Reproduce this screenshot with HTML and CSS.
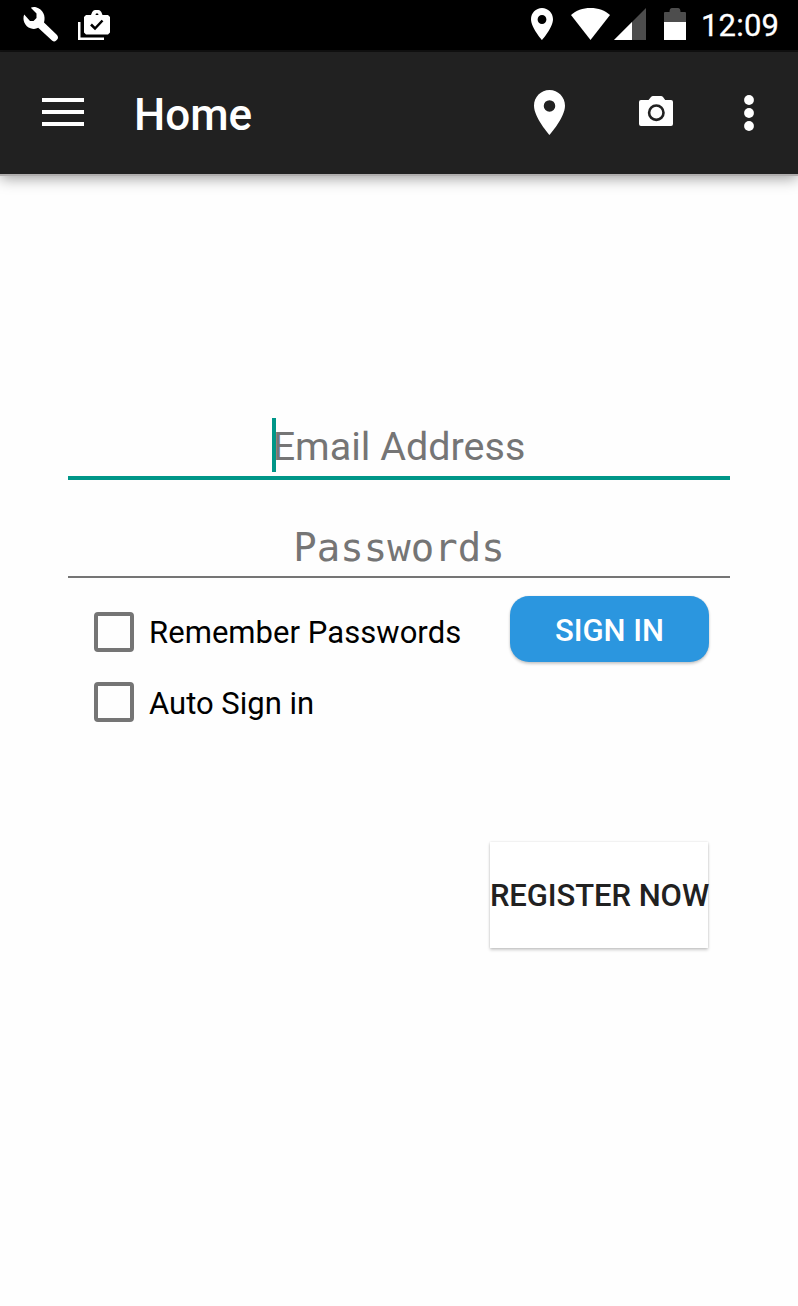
FILE: index.html
```
<!DOCTYPE html>
<html lang="en">
<head>
<meta charset="utf-8">
<title>Home</title>
<link rel="stylesheet" href="styles.css">
</head>
<body>
<div class="screen">
  <div class="status">
    <svg class="wrench" width="36" height="36" viewBox="0 0 36 36"><path d="M33.500 27.500L21 15.500C23 9 20 2 13 .2c-2-.4-4-.2-5.200.6L13.500 6.500V11l-3 3H7L1.200 7.500C-1 13 2 19.500 7.500 21.300c3 1 5.500.7 7.700-.5L29 33.500q2.200 1.800 4.200 0l1.200-1.200q1.600-2-.9-4.800z"/></svg>
    <svg class="bag" width="32" height="31" viewBox="0 0 32 31"><path d="M0 12h2.500v15.500H26V30H0zM8 5h5l1.200-3Q15.500 0 17 0h3.500q1.500 0 2.800 2L24.500 5H30l2 2v15.500L30 24.500H8L6 22.500V7zM17.500 5h3l-.5-1.500h-2z" fill-rule="evenodd"/><path class="tick" d="M13 14.500l4 4 7.500-8"/></svg>
    <span class="gap"></span>
    <svg class="pin-small" width="22" height="32" viewBox="5 2 14 20" preserveAspectRatio="none"><path d="M12 2C8.130 2 5 5.130 5 9c0 5.250 7 13 7 13s7-7.750 7-13c0-3.870-3.130-7-7-7zm0 10a2.800 2.800 0 0 1 0-5.600 2.800 2.800 0 0 1 0 5.600z"/></svg>
    <svg class="wifi" width="39" height="32" viewBox="0 0 40 32" preserveAspectRatio="none"><path d="M0 7C5 2.500 12 0 20 0s15 2.500 20 7L20 32z"/></svg>
    <svg class="signal" width="32" height="32" viewBox="0 0 32 32"><path class="dim" d="M0 32L32 0v32z"/><path d="M0 32L18 14v18z"/></svg>
    <svg class="battery" width="22" height="32" viewBox="0 0 22 32"><path class="dim" d="M0 5q0-1 1-1h4.500q0-4 2.500-4h6q2.500 0 2.500 4H21q1 0 1 1v9H0z"/><path d="M0 14h22v18H0z"/></svg>
    <span class="clock">12:09</span>
  </div>
  <div class="appbar">
    <svg class="menu" width="42" height="28" viewBox="0 0 42 28"><path d="M0 0h42v4H0zM0 12h42v4H0zM0 24h42v4H0z"/></svg>
    <h1 class="title">Home</h1>
    <span class="gap"></span>
    <svg class="pin" width="31" height="45" viewBox="5 2 14 20" preserveAspectRatio="none"><path d="M12 2C8.130 2 5 5.130 5 9c0 5.250 7 13 7 13s7-7.750 7-13c0-3.870-3.130-7-7-7zm0 9.700a2.600 2.600 0 0 1 0-5.200 2.600 2.600 0 0 1 0 5.200z"/></svg>
    <svg class="camera" width="34" height="30" viewBox="0 0 34 30"><path d="M2 4h7.500L12 1q.8-1 2-1h8q1.200 0 2 1l2.200 3H32q2 0 2 2v22q0 2-2 2H2q-2 0-2-2V6q0-2 2-2z"/><circle class="lens" cx="17.300" cy="16.700" r="7.200"/></svg>
    <svg class="more" width="10" height="36" viewBox="0 0 10 36"><circle cx="5" cy="5" r="4.900"/><circle cx="5" cy="18" r="4.900"/><circle cx="5" cy="31" r="4.900"/></svg>
  </div>
  <div class="form">
    <div class="field email"><span class="caret"></span><span class="hint">Email Address</span></div>
    <div class="field password"><span class="hint mono">Passwords</span></div>
    <div class="options">
      <div class="checks">
        <div class="check"><span class="box"></span><span class="label remember">Remember Passwords</span></div>
        <div class="check"><span class="box"></span><span class="label auto">Auto Sign in</span></div>
      </div>
      <div class="signin"><span>SIGN IN</span></div>
    </div>
    <div class="register"><span>REGISTER NOW</span></div>
  </div>
</div>
</body>
</html>
```

FILE: styles.css
```
* { box-sizing: border-box; }
body { margin: 0; background: #fefefe; font-family: Roboto, "Liberation Sans", sans-serif; }
.screen { width: 798px; height: 1306px; overflow: hidden; display: flex; flex-direction: column; }
svg { display: block; flex: none; fill: #fff; overflow: visible; }
.gap { flex: 1; }
.status { height: 52px; flex: none; background: #000; border-bottom: 2px solid #111; display: flex; align-items: flex-start; padding: 8px 19px 0 23px; }
.wrench { margin-top: -1px; }
.bag { margin: 2px 0 0 19px; }
.tick { fill: none; stroke: #000; stroke-width: 2.500px; }
.pin-small { margin-right: 18px; }
.wifi { margin-right: 4px; }
.signal { margin-right: 18px; }
.battery { margin-right: 15px; }
.dim { fill: #4d4d4d; }
.clock { width: 78px; color: #fff; font-size: 31px; line-height: 36px; letter-spacing: .2px; white-space: nowrap; -webkit-text-stroke: .3px #fff; }
.appbar { height: 122px; flex: none; background: #212121; display: flex; align-items: flex-start; padding: 0 44.500px 0 42px; box-shadow: 0 2px 0 #b0aeae, 0 4px 14px rgba(0,0,0,.4); }
.menu { margin-top: 46px; }
.title { margin: 37px 0 0 50px; color: #fff; font-size: 44px; font-weight: 500; line-height: 52px; }
.pin { margin: 38px 73.500px 0 0; }
.camera { margin: 44px 71px 0 0; }
.lens { fill: none; stroke: #212121; stroke-width: 2.600px; }
.more { margin-top: 43px; }
.form { padding: 232px 68px 0; display: flex; flex-direction: column; }
.field { position: relative; display: flex; justify-content: center; color: #757575; font-size: 39.500px; white-space: nowrap; }
.email { height: 74px; border-bottom: 4px solid #009688; padding-top: 18px; line-height: 46px; }
.caret { position: absolute; left: 204px; top: 12px; width: 4px; height: 54px; background: #009688; }
.password { height: 98px; border-bottom: 2px solid #757575; padding-top: 45px; line-height: 46px; }
.mono { font-family: "DejaVu Sans Mono", monospace; font-size: 39px; }
.options { display: flex; justify-content: space-between; padding: 18px 21px 0 26px; }
.checks { display: flex; flex-direction: column; gap: 30px; padding-top: 16px; }
.check { display: flex; align-items: center; gap: 15px; height: 40px; }
.box { width: 40px; height: 40px; border: 4px solid #757575; border-radius: 4px; }
.label { color: #000; font-size: 31px; line-height: 40px; padding-top: 2px; white-space: nowrap; }
.remember { letter-spacing: .05px; }
.auto { padding-top: 4px; }
.signin { width: 199px; height: 66px; border-radius: 19px; background: #2b96df; color: #fff; font-size: 31px; font-weight: 500; display: flex; align-items: center; justify-content: center; box-shadow: 0 2px 3px rgba(0,0,0,.2), 0 0 2px rgba(0,0,0,.1); padding-top: 2px; }
.register { align-self: flex-end; width: 218px; height: 106px; margin: 120px 22px 0 0; background: #fff; color: #212121; font-size: 31px; font-weight: 500; white-space: nowrap; display: flex; align-items: center; justify-content: center; box-shadow: 0 2px 3px rgba(0,0,0,.2), 0 0 2px rgba(0,0,0,.12); }
.register span { letter-spacing: -.06px; padding-left: 1px; }
```
